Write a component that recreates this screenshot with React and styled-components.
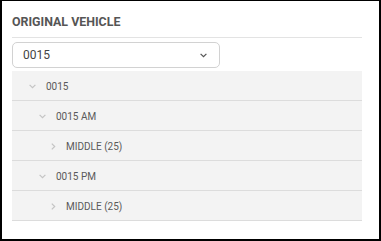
import React from 'react'
import styled, { createGlobalStyle } from 'styled-components'

const GlobalStyle = createGlobalStyle`
  html, body { margin: 0; padding: 0; background: #fff; }
  body { font-family: Roboto, "Liberation Sans", Arial, sans-serif; }
`

const Frame = styled.div`
  width: 381px;
  height: 241px;
  box-sizing: border-box;
  border: solid #000;
  border-width: 1px 2px 2px 2px;
  padding: 14px 17px 0 10px;
  background: #fff;
`

const Title = styled.div`
  font-size: 12.4px;
  line-height: 14px;
  font-weight: 700;
  color: #555;
  padding-bottom: 8px;
  border-bottom: 1px solid #e3e3e3;
`

const Select = styled.div`
  margin-top: 4px;
  width: 208px;
  height: 26px;
  box-sizing: border-box;
  border: 1px solid #d2d2d2;
  border-radius: 5px;
  display: flex;
  align-items: center;
  justify-content: space-between;
  padding: 0 12px 0 10px;
  font-size: 12px;
  color: #444;
`

const Tree = styled.div`
  margin-top: 3px;
  display: flex;
  flex-direction: column;
`

const Row = styled.div`
  height: 30px;
  border-bottom: 1px solid #dcdcdc;
  background: #f3f3f3;
  display: flex;
  align-items: center;
  padding-left: ${p => 17 + p.level * 10}px;
  padding-top: 1px;
  box-sizing: border-box;
  font-size: 10px;
  color: #5a5a5a;
`

const Toggle = styled.span`
  width: 17px;
  display: flex;
  align-items: center;
  color: #c4c4c4;
  margin-left: ${p => (p.open ? 0 : 2)}px;
  margin-right: ${p => (p.open ? 0 : -2)}px;
`

const Down = ({ color = 'currentColor' }) => (
  <svg width="7" height="5" viewBox="0 0 7 5">
    <path d="M0.6 0.8 L3.5 3.7 L6.4 0.8" fill="none" stroke={color} strokeWidth="1.2" />
  </svg>
)

const Right = () => (
  <svg width="5" height="7" viewBox="0 0 5 7">
    <path d="M0.8 0.6 L3.7 3.5 L0.8 6.4" fill="none" stroke="currentColor" strokeWidth="1.2" />
  </svg>
)

const rows = [
  { level: 0, open: true, label: '0015' },
  { level: 1, open: true, label: '0015 AM' },
  { level: 2, open: false, label: 'MIDDLE (25)' },
  { level: 1, open: true, label: '0015 PM' },
  { level: 2, open: false, label: 'MIDDLE (25)' },
]

export default function App() {
  return (
    <>
      <GlobalStyle />
      <Frame>
        <Title>ORIGINAL VEHICLE</Title>
        <Select>
          <span>0015</span>
          <Down color="#555" />
        </Select>
        <Tree>
          {rows.map((r, i) => (
            <Row key={i} level={r.level}>
              <Toggle open={r.open}>{r.open ? <Down /> : <Right />}</Toggle>
              <span>{r.label}</span>
            </Row>
          ))}
        </Tree>
      </Frame>
    </>
  )
}
